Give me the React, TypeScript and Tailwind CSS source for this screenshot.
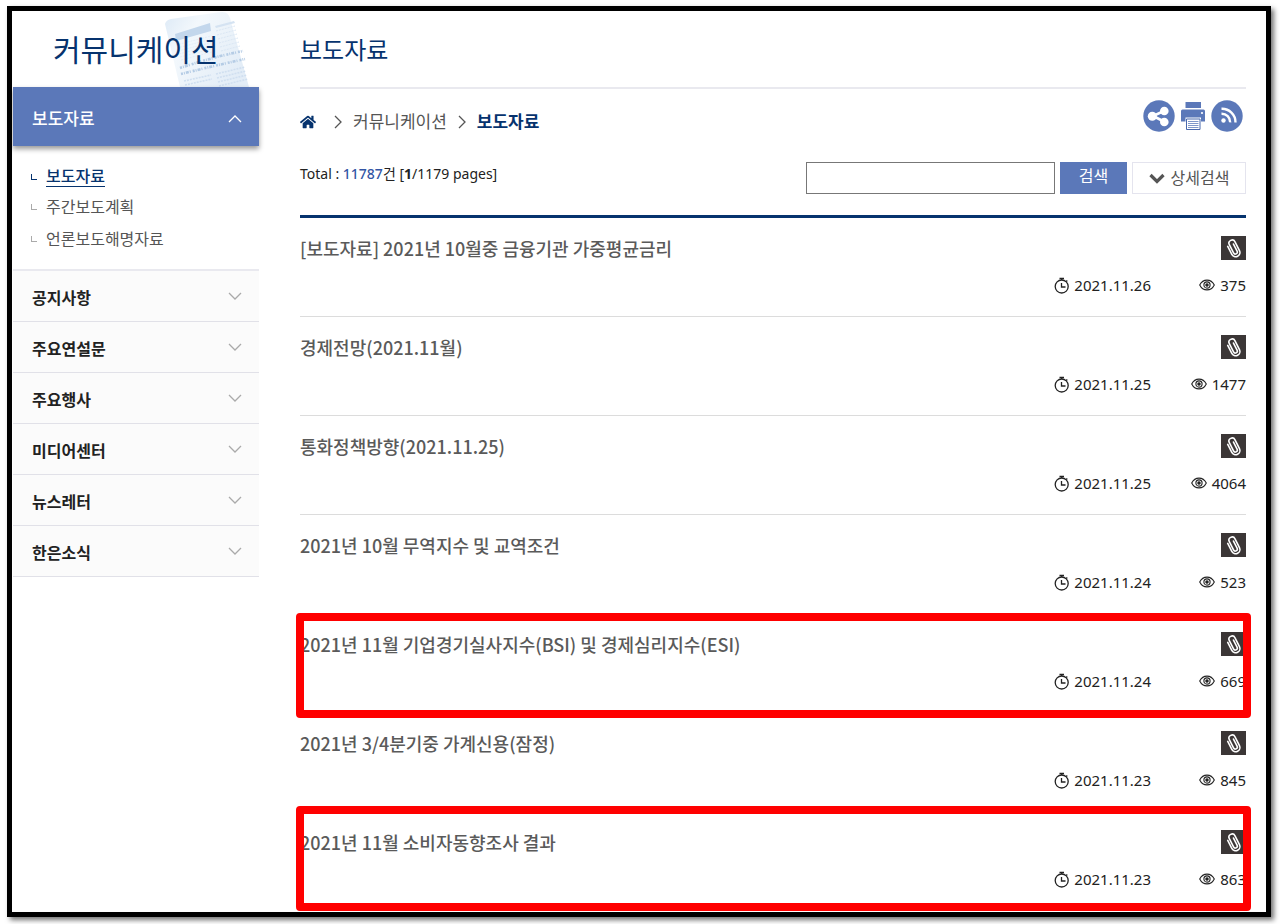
import { useState } from "react";
import { FaHome } from "react-icons/fa";

interface PressRelease {
  title: string;
  date: string;
  views: number;
  // marks rows outlined in red, with the box's vertical placement
  mark?: string;
}

const SUB_MENU = ["보도자료", "주간보도계획", "언론보도해명자료"];

const MENU = ["공지사항", "주요연설문", "주요행사", "미디어센터", "뉴스레터", "한은소식"];

const RELEASES: PressRelease[] = [
  { title: "[보도자료] 2021년 10월중 금융기관 가중평균금리", date: "2021.11.26", views: 375 },
  { title: "경제전망(2021.11월)", date: "2021.11.25", views: 1477 },
  { title: "통화정책방향(2021.11.25)", date: "2021.11.25", views: 4064 },
  { title: "2021년 10월 무역지수 및 교역조건", date: "2021.11.24", views: 523 },
  { title: "2021년 11월 기업경기실사지수(BSI) 및 경제심리지수(ESI)", date: "2021.11.24", views: 669, mark: "-top-px -bottom-1.5" },
  { title: "2021년 3/4분기중 가계신용(잠정)", date: "2021.11.23", views: 845 },
  { title: "2021년 11월 소비자동향조사 결과", date: "2021.11.23", views: 863, mark: "-top-1.5 bottom-0" },
];

function Chevron({ className, flip = false }: { className?: string; flip?: boolean }) {
  return (
    <svg viewBox="0 0 14 8" className={className} fill="none" stroke="currentColor" strokeWidth="1.3" aria-hidden="true">
      <path d={flip ? "M1 7 7 1l6 6" : "M1 1l6 6 6-6"} />
    </svg>
  );
}

function Newspaper() {
  const lines = [0, 1, 2, 3, 4, 5];
  return (
    <svg viewBox="0 0 88 76" className="absolute right-2 bottom-0 h-19 w-22" aria-hidden="true">
      <defs>
        <linearGradient id="paper" x1="0" y1="0" x2="1" y2="0.6">
          <stop offset="0" stopColor="#dce9f6" />
          <stop offset="0.35" stopColor="#f3f8fc" />
          <stop offset="1" stopColor="#e3edf7" />
        </linearGradient>
        <filter id="soft">
          <feGaussianBlur stdDeviation="0.7" />
        </filter>
      </defs>
      <g filter="url(#soft)">
        <path d="M2 13Q3 9 8 8L58 1q7-1 9 6l19 69H17Z" fill="url(#paper)" />
        <path d="M12 23 47 12l1 8-35 10Z" fill="#c3d7ec" />
        <path d="M52 15 71 10l1 2-19 5Z" fill="#d5e3f2" />
        <g stroke="#dbe7f4" strokeWidth="1" strokeDasharray="2 1">
          {lines.map((i) => (
            <path key={i} d={`M${53 + i} ${20 + i * 4}l19-5`} />
          ))}
          {lines.map((i) => (
            <path key={i} d={`M${13 + i} ${34 + i * 3}l35-9`} opacity="0.6" />
          ))}
        </g>
        <g stroke="#b5cce5" strokeWidth="2.6" strokeDasharray="2 1 1 1 3 1 1 2" fill="none">
          <path d="M17 57Q50 46 80 40" />
          <path d="M18 63Q50 55 82 48" />
        </g>
        <g stroke="#d0dff0" strokeWidth="1.6" strokeDasharray="2 1">
          <path d="M21 70 48 64" />
          <path d="M22 74 49 68" />
          <path d="M53 63 82 56" />
          <path d="M54 67 83 60" />
          <path d="M55 71 84 64" />
          <path d="M56 75 85 68" />
        </g>
      </g>
    </svg>
  );
}

function ShareIcon() {
  return (
    <svg viewBox="0 0 32 32" className="size-8" aria-hidden="true">
      <circle cx="16" cy="16" r="15.7" fill="#5b78b9" />
      <path d="M22 10.5 10 16l12 6" fill="none" stroke="#fff" strokeWidth="2.6" />
      <circle cx="9.3" cy="16.3" r="4.5" fill="#fff" />
      <circle cx="21.3" cy="11" r="4.3" fill="#fff" />
      <circle cx="21.3" cy="22" r="4.3" fill="#fff" />
    </svg>
  );
}

function PrintIcon() {
  return (
    <svg viewBox="0 0 24 30" className="h-[30px] w-6" fill="#5b78b9" aria-hidden="true">
      <path d="M4.5 1H20v6H4.5z" />
      <path d="M1.5 8.5h21A1.5 1.5 0 0 1 24 10v10.500h-4V16.500H4.500v4H0V10a1.500 1.500 0 0 1 1.500-1.500Z" />
      <circle cx="21" cy="12" r="1.1" fill="#fff" />
      <path d="M5.500 18H19v10.500H5.500z" fill="#fff" stroke="#4968ad" />
      <path d="M7 20.500h10.500M7 22.500h10.500M7 24.500h10.500M7 26.500h10.500" stroke="#7f97ca" />
    </svg>
  );
}

function RssIcon() {
  return (
    <svg viewBox="0 0 32 32" className="size-8" aria-hidden="true">
      <circle cx="16" cy="16" r="15.7" fill="#5b78b9" />
      <circle cx="12.5" cy="20.5" r="2.2" fill="#fff" />
      <path d="M10.500 13.700a8.500 8.500 0 0 1 8.700 8.700M10.500 8.700a13.500 13.500 0 0 1 14 13.700" fill="none" stroke="#fff" strokeWidth="2.4" />
    </svg>
  );
}

function ClipIcon() {
  return (
    <svg viewBox="0 0 25 24" className="h-6 w-[25px] bg-[#3b3636]" role="img" aria-label="첨부파일">
      <g transform="rotate(-27 12.5 12.5)" fill="none" stroke="#fff" strokeWidth="1.6" strokeLinecap="round">
        <path d="M8.300 8v9a4.300 4.300 0 0 0 8.600 0V7.200a3.200 3.200 0 0 0-6.400 0V16.500a2 2 0 0 0 4 0V8.500" />
      </g>
    </svg>
  );
}

function ClockIcon() {
  return (
    <svg viewBox="0 0 16 17" className="h-[17px] w-4" fill="none" stroke="#222" strokeWidth="1.3" aria-hidden="true">
      <circle cx="7.7" cy="9.5" r="6.5" />
      <path d="M5.500 1.500H10M7.700 1v2M12.300 4.500l1-1M7.500 6v4h4" />
    </svg>
  );
}

function EyeIcon() {
  return (
    <svg viewBox="0 0 16 12" className="h-3 w-4" fill="none" stroke="#222" strokeWidth="1.1" aria-hidden="true">
      <path d="M.7 6C2.300 2.800 5 1.100 8 1.100S13.700 2.800 15.300 6C13.700 9.200 11 10.900 8 10.900S2.300 9.200.7 6Z" />
      <circle cx="8" cy="6" r="3.1" />
      <circle cx="8" cy="6" r="1.2" fill="#222" />
    </svg>
  );
}

function Sidebar() {
  const [open, setOpen] = useState(true);

  return (
    <aside className="w-[247px] shrink-0 pl-px">
      <h2 className="relative flex h-19 items-center pl-10 text-[30px] text-[#06336e]">
        <Newspaper />
        <span className="relative">커뮤니케이션</span>
      </h2>
      <button
        type="button"
        aria-expanded={open}
        onClick={() => setOpen(!open)}
        className="relative flex h-[59px] w-full items-center justify-between bg-[#5b78b9] pt-1 pr-[17px] pl-[19px] text-[17px] font-medium text-white shadow-[0_3px_5px_rgba(0,0,0,0.4)]"
      >
        보도자료
        <Chevron flip className="h-2 w-3.5" />
      </button>
      {open && (
        <ul className="flex flex-col gap-2 pt-5 pb-[18px] pl-[18px] text-base leading-6 text-[#555]">
          {SUB_MENU.map((item, i) => (
            <li key={item} className="flex items-center gap-[9px]">
              <span className={`size-1.5 border-b border-l ${i === 0 ? "border-[#06336e]" : "border-[#aaa]"}`} />
              <a href="#" className={i === 0 ? "border-b border-[#06336e] leading-5 font-medium text-[#06336e]" : ""}>
                {item}
              </a>
            </li>
          ))}
        </ul>
      )}
      <ul className="border-t-2 border-[#e9e9ef]">
        {MENU.map((item) => (
          <li key={item} className="border-b border-[#e1e1e8] bg-[#fbfbfb]">
            <button
              type="button"
              className="flex h-[50px] w-full items-center justify-between pr-[17px] pl-[19px] text-base font-bold text-[#222]"
            >
              <span className="pt-1">{item}</span>
              <Chevron className="h-2 w-3.5 text-[#aaa]" />
            </button>
          </li>
        ))}
      </ul>
    </aside>
  );
}

function ReleaseRow({ item, last }: { item: PressRelease; last: boolean }) {
  return (
    <li className={`relative h-[99px] pt-[18px] ${last ? "" : "border-b border-[#dcdcdc]"}`}>
      <div className="flex items-start justify-between">
        <a href="#" className="font-['Noto_Sans_CJK_KR',sans-serif] text-lg leading-6 font-medium text-[#5a5a5a]">
          {item.title}
        </a>
        <ClipIcon />
      </div>
      <div className="mt-[13px] flex items-center justify-end text-[15px] leading-6 text-[#222]">
        <span className="flex items-center gap-1">
          <ClockIcon />
          {item.date}
        </span>
        <span className="flex w-[95px] items-center justify-end gap-[5px]">
          <EyeIcon />
          {item.views}
        </span>
      </div>
      {item.mark && (
        <div className={`pointer-events-none absolute -right-[5px] -left-1 z-10 rounded-sm border-8 border-[#f00] ${item.mark}`} />
      )}
    </li>
  );
}

export default function App() {
  const [query, setQuery] = useState("");

  return (
    <div className="min-h-screen bg-white pt-1.5 pr-[9px] pb-[7px] pl-[7px] font-['Noto_Sans','Noto_Sans_CJK_KR',sans-serif]">
      <div className="flex border-5 border-black bg-white pb-px shadow-[3px_3px_5px_rgba(0,0,0,0.55)]">
        <Sidebar />
        <main className="min-w-0 flex-1 pr-5 pl-[41px]">
          <h1 className="flex h-[78px] items-center border-b-2 border-[#e9e9ef] pt-0.5 text-2xl text-[#06336e]">보도자료</h1>

          <div className="flex items-start justify-between pt-[11px]">
            <nav className="flex h-11 items-center text-[17px] text-[#555]" aria-label="현재 위치">
              <a href="#" aria-label="홈" className="text-[#06336e]">
                <FaHome className="size-4" />
              </a>
              <Chevron className="mr-2 ml-[15px] h-2 w-3.5 -rotate-90" />
              <a href="#">커뮤니케이션</a>
              <Chevron className="mx-2 h-2 w-3.5 -rotate-90" />
              <a href="#" className="font-bold text-[#06336e]">보도자료</a>
            </nav>
            <div className="flex items-center gap-1.5 pr-[3px]">
              <button type="button" aria-label="공유"><ShareIcon /></button>
              <button type="button" aria-label="인쇄"><PrintIcon /></button>
              <button type="button" aria-label="RSS"><RssIcon /></button>
            </div>
          </div>

          <div className="flex items-start justify-between pt-[18px] pb-[21px]">
            <p className="text-sm leading-6 text-[#222]">
              Total : <span className="font-medium text-[#3255a4]">11787</span>건 [<b>1</b>/1179 pages]
            </p>
            <form className="flex gap-[5px]" onSubmit={(e) => e.preventDefault()}>
              <input
                type="text"
                aria-label="검색어"
                value={query}
                onChange={(e) => setQuery(e.target.value)}
                className="h-8 w-[249px] border border-[#777] px-2 text-base outline-none"
              />
              <button type="submit" className="h-8 w-[67px] bg-[#5b78b9] pb-1 text-base text-white">
                검색
              </button>
              <button
                type="button"
                className="flex h-8 w-[114px] items-center justify-center gap-1.5 border border-[#e4e4ee] text-base text-[#555]"
              >
                <svg viewBox="0 0 16 11" className="h-[11px] w-4" fill="none" stroke="#555" strokeWidth="3.2" aria-hidden="true">
                  <path d="M1.5 2 8 8.5 14.5 2" />
                </svg>
                상세검색
              </button>
            </form>
          </div>

          <ul className="border-t-3 border-[#06336e]">
            {RELEASES.map((item, i) => (
              <ReleaseRow key={item.title} item={item} last={i === RELEASES.length - 1} />
            ))}
          </ul>
        </main>
      </div>
    </div>
  );
}
